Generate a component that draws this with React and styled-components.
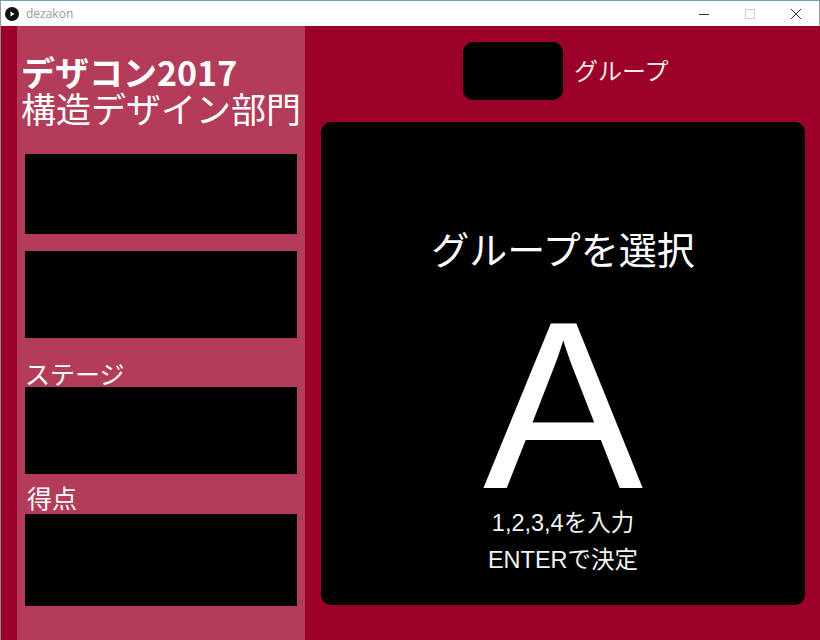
import React from "react";
import styled, { createGlobalStyle } from "styled-components";

const GlobalStyle = createGlobalStyle`
  html, body {
    margin: 0;
    padding: 0;
    background: #ffffff;
  }
  #root {
    width: 820px;
    height: 640px;
  }
`;

const JP = `"Noto Sans CJK JP", "Noto Sans", sans-serif`;
const MIXED = `"Liberation Sans", "Noto Sans CJK JP", sans-serif`;

const App = () => {
  return (
    <>
      <GlobalStyle />
      <Window>
        <TitleBar>
          <AppIcon>
            <svg width="14" height="14" viewBox="0 0 14 14">
              <circle cx="7" cy="7" r="7" fill="#111" />
              <path d="M5.5 4.5 L9.5 7 L5.5 9.5 Z" fill="#fff" />
            </svg>
          </AppIcon>
          <WindowTitle>dezakon</WindowTitle>
          <Controls>
            <ControlBtn>
              <svg width="10" height="10" viewBox="0 0 10 10">
                <path d="M0 5.5 H10" stroke="#333" strokeWidth="1" />
              </svg>
            </ControlBtn>
            <ControlBtn>
              <svg width="10" height="10" viewBox="0 0 10 10">
                <rect x="0.5" y="0.5" width="9" height="9" fill="none" stroke="#ccc" strokeWidth="1" />
              </svg>
            </ControlBtn>
            <ControlBtn>
              <svg width="10" height="10" viewBox="0 0 10 10">
                <path d="M0 0 L10 10 M10 0 L0 10" stroke="#333" strokeWidth="1" />
              </svg>
            </ControlBtn>
          </Controls>
        </TitleBar>

        <Body>
          <Sidebar>
            <Heading>
              <HeadingLine $bold>デザコン2017</HeadingLine>
              <HeadingLine>構造デザイン部門</HeadingLine>
            </Heading>
            <InfoBox $h={80} $mt={28} />
            <InfoBox $h={87} $mt={17} />
            <Label $mt={22}>ステージ</Label>
            <InfoBox $h={87} $mt={1} />
            <Label $mt={10} $indent={2}>得点</Label>
            <InfoBox $h={92} $mt={4} />
          </Sidebar>

          <Main>
            <GroupRow>
              <GroupBadge />
              <GroupLabel>グループ</GroupLabel>
            </GroupRow>
            <Panel>
              <PanelTitle>グループを選択</PanelTitle>
              <BigLetter>A</BigLetter>
              <Hint>1,2,3,4を入力</Hint>
              <Hint>ENTERで決定</Hint>
            </Panel>
          </Main>
        </Body>
      </Window>
    </>
  );
};

const Window = styled.div`
  width: 820px;
  height: 640px;
  display: flex;
  flex-direction: column;
  overflow: hidden;
  box-sizing: border-box;
`;

const TitleBar = styled.div`
  height: 26px;
  box-sizing: border-box;
  border-top: 1px solid #6f9fc0;
  border-left: 1px solid #9a9a9a;
  border-right: 1px solid #9a9a9a;
  background: #ffffff;
  display: flex;
  align-items: center;
  padding-left: 4px;
`;

const AppIcon = styled.div`
  width: 14px;
  height: 14px;
  display: flex;
  margin-top: 1px;
`;

const WindowTitle = styled.span`
  margin-left: 7px;
  font-family: "Open Sans", "Noto Sans", sans-serif;
  font-size: 12px;
  color: #9a9a9a;
  line-height: 1;
`;

const Controls = styled.div`
  margin-left: auto;
  display: flex;
  height: 100%;
`;

const ControlBtn = styled.div`
  width: 46px;
  height: 100%;
  display: flex;
  align-items: center;
  justify-content: center;
`;

const Body = styled.div`
  flex: 1;
  display: flex;
  background: #9b0029;
  border-left: 1px solid #8a8a8a;
  padding-left: 16px;
`;

const Sidebar = styled.div`
  width: 288px;
  background: #b33c5a;
  box-sizing: border-box;
  padding: 28px 8px 0;
  display: flex;
  flex-direction: column;
  color: #ffffff;
  font-family: ${JP};
`;

const Heading = styled.div`
  margin-left: -4px;
`;

const HeadingLine = styled.div`
  font-size: ${(p) => (p.$bold ? 34 : 35)}px;
  font-weight: ${(p) => (p.$bold ? 700 : 400)};
  line-height: 36px;
  white-space: nowrap;
`;

const InfoBox = styled.div`
  height: ${(p) => p.$h}px;
  margin-top: ${(p) => p.$mt}px;
  background: #000000;
  flex-shrink: 0;
`;

const Label = styled.div`
  margin-top: ${(p) => p.$mt}px;
  padding-left: ${(p) => p.$indent || 0}px;
  font-size: 25px;
  line-height: 26px;
`;

const Main = styled.div`
  flex: 1;
  display: flex;
  flex-direction: column;
  padding: 16px 15px 35px 16px;
`;

const GroupRow = styled.div`
  display: grid;
  grid-template-columns: 1fr 1fr;
  align-items: center;
  height: 58px;
`;

const GroupBadge = styled.div`
  justify-self: end;
  width: 100px;
  height: 58px;
  border-radius: 10px;
  background: #000000;
`;

const GroupLabel = styled.div`
  margin-left: 11px;
  font-family: ${JP};
  font-size: 24px;
  color: #f4e6ea;
  line-height: 1;
  margin-top: -2px;
`;

const Panel = styled.div`
  margin-top: 22px;
  height: 483px;
  background: #000000;
  border-radius: 10px;
  display: flex;
  flex-direction: column;
  align-items: center;
  padding-top: 107px;
  box-sizing: border-box;
  color: #ffffff;
`;

const PanelTitle = styled.div`
  font-family: ${JP};
  font-size: 38px;
  line-height: 38px;
`;

const BigLetter = styled.div`
  font-family: "Liberation Sans", Arial, sans-serif;
  font-size: 240px;
  line-height: 200px;
  margin-top: 38px;
`;

const Hint = styled.div`
  font-family: ${MIXED};
  font-size: 23.5px;
  line-height: 37px;
  color: #f2f2f2;
`;

export default App;
